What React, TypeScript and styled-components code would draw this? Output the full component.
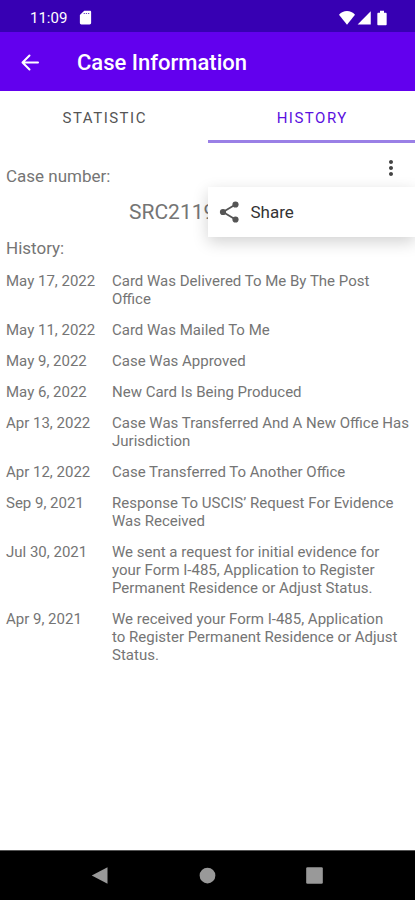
import React from "react";
import styled, { createGlobalStyle } from "styled-components";

const GlobalStyle = createGlobalStyle`
  * { box-sizing: border-box; }
  body { margin: 0; font-family: Roboto, "Liberation Sans", sans-serif; background: #fff; }
  button { font: inherit; border: 0; padding: 0; background: none; cursor: pointer; }
`;

const Screen = styled.div`
  min-height: 100vh;
  display: flex;
  flex-direction: column;
  background: #fff;
`;

const StatusBar = styled.div`
  height: 32px;
  flex: none;
  display: flex;
  align-items: center;
  padding: 3px 25px 0 30px;
  background: #3700b3;
  color: #fff;
  font-size: 15px;
  font-weight: 400;
`;

const StatusIcons = styled.div<{ $end?: boolean }>`
  display: flex;
  align-items: center;
  gap: 2px;
  margin-left: ${(p) => (p.$end ? "auto" : "11px")};
`;

const AppBar = styled.header`
  height: 59px;
  flex: none;
  display: flex;
  align-items: center;
  gap: 34px;
  padding: 3px 17px 0;
  background: #6200ee;
  color: #fff;
`;

const IconButton = styled.button<{ $raised?: boolean }>`
  display: flex;
  align-items: center;
  justify-content: center;
  align-self: ${(p) => (p.$raised ? "flex-start" : "center")};
  width: 26px;
  height: 26px;
  color: inherit;
`;

const Title = styled.h1`
  margin: 0;
  font-size: 22px;
  line-height: 28px;
  font-weight: 500;
`;

const Tabs = styled.div`
  display: grid;
  grid-template-columns: 1fr 1fr;
  flex: none;
`;

const Tab = styled.button<{ $active?: boolean }>`
  height: 52px;
  && {
    padding: 4px 0 0 2px;
    border-bottom: 3px solid ${(p) => (p.$active ? "#9a80e6" : "transparent")};
    font-size: 15px;
    font-weight: 400;
  }
  letter-spacing: 1.5px;
  color: ${(p) => (p.$active ? "#5a10e0" : "#555")};
`;

const Content = styled.main`
  flex: 1;
  padding: 12px 6px;
  color: #757575;
`;

const CaseRow = styled.div`
  position: relative;
  display: flex;
  justify-content: space-between;
  align-items: center;
  height: 41px;
  padding-right: 5px;
`;

const MoreColor = styled.span`
  display: flex;
  color: #444;
`;

const Label = styled.h2`
  margin: 0;
  font-size: 17px;
  line-height: 24px;
  font-weight: 400;
`;

const CaseNumber = styled.div`
  padding-left: 123px;
  font-size: 21px;
  line-height: 32px;
  margin-bottom: 8px;
`;

const Menu = styled.div`
  position: absolute;
  z-index: 1;
  top: 32px;
  right: -6px;
  width: 50vw;
  height: 50px;
  background: #fff;
  box-shadow: 0 5px 16px rgba(0, 0, 0, 0.18);
`;

const MenuItem = styled.button`
  display: flex;
  align-items: center;
  gap: 9px;
  width: 100%;
  height: 100%;
  && { padding: 0 10px; font-size: 17px; }
  color: #333;
`;

const History = styled.table`
  width: 100%;
  margin-top: 6px;
  border-collapse: collapse;
  font-size: 15px;
  line-height: 18px;
`;

const Cell = styled.td<{ $date?: boolean }>`
  width: ${(p) => (p.$date ? "106px" : "auto")};
  padding: 6px 0 7px;
  vertical-align: top;
`;

const NavBar = styled.nav`
  height: 50px;
  flex: none;
  display: flex;
  align-items: center;
  justify-content: center;
  gap: 81px;
  border-top: 1px solid #555;
  background: #000;
  color: #999;
`;

const rows = [
  ["May 17, 2022", "Card Was Delivered To Me By The Post Office"],
  ["May 11, 2022", "Card Was Mailed To Me"],
  ["May 9, 2022", "Case Was Approved"],
  ["May 6, 2022", "New Card Is Being Produced"],
  ["Apr 13, 2022", "Case Was Transferred And A New Office Has Jurisdiction"],
  ["Apr 12, 2022", "Case Transferred To Another Office"],
  ["Sep 9, 2021", "Response To USCIS’ Request For Evidence Was Received"],
  ["Jul 30, 2021", "We sent a request for initial evidence for your Form I-485, Application to Register Permanent Residence or Adjust Status."],
  ["Apr 9, 2021", "We received your Form I-485, Application to\u00a0Register Permanent Residence or Adjust Status."],
];

const Icon = ({ d, size = 24 }: { d: string; size?: number }) => (
  <svg width={size} height={size} viewBox="0 0 24 24" fill="currentColor" aria-hidden="true">
    <path d={d} />
  </svg>
);

const BackIcon = () => (
  <svg
    width="24"
    height="24"
    viewBox="0 0 24 24"
    fill="none"
    stroke="currentColor"
    strokeWidth="2"
    strokeLinecap="round"
    strokeLinejoin="round"
    aria-hidden="true"
  >
    <path d="M20 11.500H4.500M11.500 4.500l-7 7 7 7" />
  </svg>
);

const paths = {
  sd: "M19 1H10L3 8v12.500C3 22 4 23 5.500 23h13c1.500 0 2.500-1 2.500-2.500V3c0-1.200-.8-2-2-2zM11 6.500H9V5h2zM14.500 6.500h-2V5h2zM18 6.500h-2V5h2z",
  wifi: "M12 22 0 7C3.300 3.500 7.400 1.500 12 1.500S20.700 3.500 24 7z",
  signal: "M1 23h21V2z",
  battery: "M17.500 4H15V1H9v3H6.500C5.500 4 5 4.800 5 5.500v15.700c0 1 .6 1.800 1.500 1.800h11c.9 0 1.500-.8 1.500-1.800V5.500c0-.8-.6-1.500-1.500-1.500z",
  more: "M12 8c1.100 0 2-.9 2-2s-.9-2-2-2-2 .9-2 2 .9 2 2 2zm0 2c-1.100 0-2 .9-2 2s.9 2 2 2 2-.9 2-2-.9-2-2-2zm0 6c-1.100 0-2 .9-2 2s.9 2 2 2 2-.9 2-2-.9-2-2-2z",
  navBack: "M20 2.500v19L2 12z",
  home: "M12 3a9 9 0 1 0 0 18 9 9 0 0 0 0-18z",
  recent: "M4 2.500h16q1.500 0 1.500 1.500v16q0 1.500-1.500 1.500H4q-1.500 0-1.500-1.500V4q0-1.500 1.500-1.500z",
};

const ShareIcon = () => (
  <svg width="24" height="24" viewBox="0 0 24 24" fill="#555" aria-hidden="true">
    <path d="M17.500 4.500 5 12l12.500 7.500" fill="none" stroke="#555" strokeWidth="1.800" />
    <circle cx="17.500" cy="4.500" r="3.100" />
    <circle cx="5" cy="12" r="3.100" />
    <circle cx="17.500" cy="19.500" r="3.100" />
  </svg>
);

export default function App() {
  return (
    <Screen>
      <GlobalStyle />
      <StatusBar>
        11:09
        <StatusIcons><Icon d={paths.sd} size={15} /></StatusIcons>
        <StatusIcons $end>
          <Icon d={paths.wifi} size={16} />
          <Icon d={paths.signal} size={15} />
          <Icon d={paths.battery} size={16} />
        </StatusIcons>
      </StatusBar>
      <AppBar>
        <IconButton aria-label="Back"><BackIcon /></IconButton>
        <Title>Case Information</Title>
      </AppBar>
      <Tabs role="tablist">
        <Tab role="tab" aria-selected={false}>STATISTIC</Tab>
        <Tab role="tab" aria-selected $active>HISTORY</Tab>
      </Tabs>
      <Content>
        <CaseRow>
          <Label>Case number:</Label>
          <IconButton $raised aria-label="More options">
            <MoreColor><Icon d={paths.more} /></MoreColor>
          </IconButton>
          <Menu role="menu">
            <MenuItem role="menuitem"><ShareIcon />Share</MenuItem>
          </Menu>
        </CaseRow>
        <CaseNumber>SRC2119</CaseNumber>
        <Label>History:</Label>
        <History>
          <tbody>
            {rows.map(([date, text]) => (
              <tr key={date}><Cell $date>{date}</Cell><Cell>{text}</Cell></tr>
            ))}
          </tbody>
        </History>
      </Content>
      <NavBar>
        <IconButton aria-label="Navigate back"><Icon d={paths.navBack} size={21} /></IconButton>
        <IconButton aria-label="Home"><Icon d={paths.home} size={21} /></IconButton>
        <IconButton aria-label="Recent apps"><Icon d={paths.recent} size={21} /></IconButton>
      </NavBar>
    </Screen>
  );
}
